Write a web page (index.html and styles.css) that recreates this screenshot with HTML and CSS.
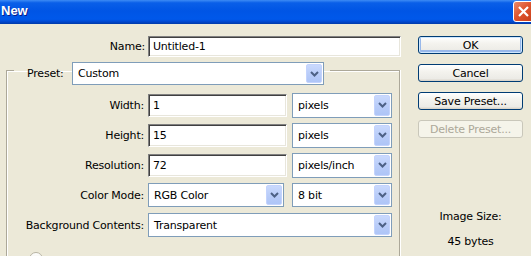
FILE: index.html
```html
<!DOCTYPE html>
<html>
<head>
<meta charset="utf-8">
<link rel="stylesheet" href="styles.css">
</head>
<body>
<div class="window">
  <div class="titlebar">
    <span class="title">New</span>
    <span class="close"><svg width="13" height="13" viewBox="0 0 13 13"><path d="M2 2 L11 11 M11 2 L2 11" stroke="#fff" stroke-width="2.2" fill="none"/></svg></span>
  </div>
  <div class="content">
    <div class="left">
      <div class="name-row">
        <span class="name-label">Name:</span>
        <div class="field name-field">Untitled-1</div>
      </div>
      <fieldset class="group">
        <legend class="legend">
          <span class="preset-label">Preset:</span>
          <div class="combo preset-combo"><span class="combo-text">Custom</span><span class="arrow"><svg width="9" height="6" viewBox="0 0 9 6"><path d="M1 1 L4.5 4.5 L8 1" stroke="#4d6185" stroke-width="2" fill="none"/></svg></span></div>
        </legend>
        <div class="rows">
          <div class="row">
            <span class="lbl">Width:</span>
            <div class="field num-field">1</div>
            <div class="combo unit-combo"><span class="combo-text">pixels</span><span class="arrow"><svg width="9" height="6" viewBox="0 0 9 6"><path d="M1 1 L4.5 4.5 L8 1" stroke="#4d6185" stroke-width="2" fill="none"/></svg></span></div>
          </div>
          <div class="row">
            <span class="lbl">Height:</span>
            <div class="field num-field">15</div>
            <div class="combo unit-combo"><span class="combo-text">pixels</span><span class="arrow"><svg width="9" height="6" viewBox="0 0 9 6"><path d="M1 1 L4.5 4.5 L8 1" stroke="#4d6185" stroke-width="2" fill="none"/></svg></span></div>
          </div>
          <div class="row">
            <span class="lbl">Resolution:</span>
            <div class="field num-field">72</div>
            <div class="combo unit-combo"><span class="combo-text">pixels/inch</span><span class="arrow"><svg width="9" height="6" viewBox="0 0 9 6"><path d="M1 1 L4.5 4.5 L8 1" stroke="#4d6185" stroke-width="2" fill="none"/></svg></span></div>
          </div>
          <div class="row">
            <span class="lbl">Color Mode:</span>
            <div class="combo mode-combo"><span class="combo-text">RGB Color</span><span class="arrow"><svg width="9" height="6" viewBox="0 0 9 6"><path d="M1 1 L4.5 4.5 L8 1" stroke="#4d6185" stroke-width="2" fill="none"/></svg></span></div>
            <div class="combo bit-combo"><span class="combo-text">8 bit</span><span class="arrow"><svg width="9" height="6" viewBox="0 0 9 6"><path d="M1 1 L4.5 4.5 L8 1" stroke="#4d6185" stroke-width="2" fill="none"/></svg></span></div>
          </div>
          <div class="row">
            <span class="lbl">Background Contents:</span>
            <div class="combo bg-combo"><span class="combo-text">Transparent</span><span class="arrow"><svg width="9" height="6" viewBox="0 0 9 6"><path d="M1 1 L4.5 4.5 L8 1" stroke="#4d6185" stroke-width="2" fill="none"/></svg></span></div>
          </div>
          <div class="advanced"></div>
        </div>
      </fieldset>
    </div>
    <div class="right">
      <div class="btn btn-default">OK</div>
      <div class="btn">Cancel</div>
      <div class="btn">Save Preset...</div>
      <div class="btn btn-disabled">Delete Preset...</div>
      <div class="image-size">
        <div>Image Size:</div>
        <div>45 bytes</div>
      </div>
    </div>
  </div>
</div>
</body>
</html>
```
FILE: styles.css
```css
* { box-sizing: border-box; }
html, body { margin: 0; padding: 0; }
body {
  width: 531px;
  height: 256px;
  overflow: hidden;
  background: #ece9d8;
  font-family: "DejaVu Sans", "Liberation Sans", sans-serif;
  font-size: 11px;
  letter-spacing: -0.2px;
  color: #000;
}
.window { width: 531px; height: 256px; overflow: hidden; }

.titlebar {
  height: 24px;
  display: flex;
  align-items: center;
  justify-content: space-between;
  background: linear-gradient(to bottom, #3d8bf5 0, #0a5fe8 12%, #0055e5 45%, #0058ea 80%, #0048d0 90%, #003aa8 100%);
  padding-left: 1px;
}
.title {
  font-family: "Liberation Sans", sans-serif;
  letter-spacing: 0;
  font-weight: bold;
  font-size: 13px;
  color: #fff;
  text-shadow: 1px 1px 0 #0a1e8a;
  margin-top: -3px;
}
.close {
  width: 21px;
  height: 21px;
  margin-right: -3px;
  margin-top: -2px;
  border: 1px solid #fff;
  border-radius: 3px;
  background: linear-gradient(135deg, #e98a6c 0, #e0552f 45%, #c63e1a 100%);
  display: flex;
  align-items: center;
  justify-content: center;
}

.content { display: flex; padding-top: 12px; }
.left { width: 418px; }
.right { width: 105px; display: flex; flex-direction: column; }

.name-row { display: flex; align-items: center; height: 21px; }
.name-label { width: 145px; text-align: right; margin-right: 3px; }

.field {
  background: #fff;
  border-top: 1px solid #808080;
  border-left: 1px solid #808080;
  border-right: 1px solid #fff;
  border-bottom: 1px solid #fff;
  box-shadow: inset 1px 1px 0 #404040, inset -1px -1px 0 #e8e6dc;
  padding-left: 4px;
  display: flex;
  align-items: center;
}
.name-field { width: 253px; height: 21px; }
.num-field { width: 139px; height: 23px; }

.group {
  margin: -2px 0 0 6px;
  width: 394px;
  height: 220px;
  padding: 0 0 0 7px;
  border: 1px solid #aca899;
  border-bottom: none;
  box-shadow: inset 1px 1px 0 #fff, 1px 0 0 #fff;
  min-width: 0;
}
.legend {
  display: flex;
  align-items: center;
  padding: 7px 6px 0 13px;
}
.preset-label { width: 45px; }
.preset-combo { width: 252px; height: 23px; }

.combo {
  background: #fff;
  border: 1px solid #7f9db9;
  display: flex;
  align-items: center;
  justify-content: space-between;
  padding: 1px 1px 1px 5px;
}
.combo-text { white-space: nowrap; }
.arrow {
  width: 16px;
  height: 100%;
  border: 1px solid #c3d3fd;
  border-radius: 2px;
  background: linear-gradient(to bottom, #c9d9fd 0, #b7cbf8 60%, #aec5f7 100%);
  display: flex;
  align-items: center;
  justify-content: center;
}

.rows { margin-top: 8px; }
.row { display: flex; align-items: center; height: 24px; margin-bottom: 6px; }
.lbl { width: 130px; text-align: right; margin-right: 4px; white-space: nowrap; }
.unit-combo { width: 100px; height: 25px; margin-left: 5px; }
.mode-combo { width: 136px; height: 24px; }
.bit-combo { width: 100px; height: 24px; margin-left: 8px; }
.bg-combo { width: 244px; height: 24px; }

.advanced {
  margin: 15px 0 0 15px;
  width: 14px;
  height: 14px;
  border-radius: 50%;
  border: 1px solid #b8b4a4;
  background: linear-gradient(#fff, #e4e1d4);
}

.btn {
  height: 18px;
  margin-bottom: 10px;
  border: 1px solid #003c74;
  border-radius: 3px;
  background: linear-gradient(to bottom, #ffffff 0, #f4f3ee 40%, #ecebe6 85%, #d6d0c5 100%);
  display: flex;
  align-items: center;
  justify-content: center;
  white-space: nowrap;
}
.btn-default { box-shadow: inset 0 0 0 1px #cee7ff, inset 0 -1px 0 2px #98b8ea; }
.btn-disabled {
  border-color: #c9c7ba;
  background: #f5f4ea;
  color: #aca899;
}
.image-size {
  margin-top: 56px;
  text-align: center;
  line-height: 25px;
}
```
